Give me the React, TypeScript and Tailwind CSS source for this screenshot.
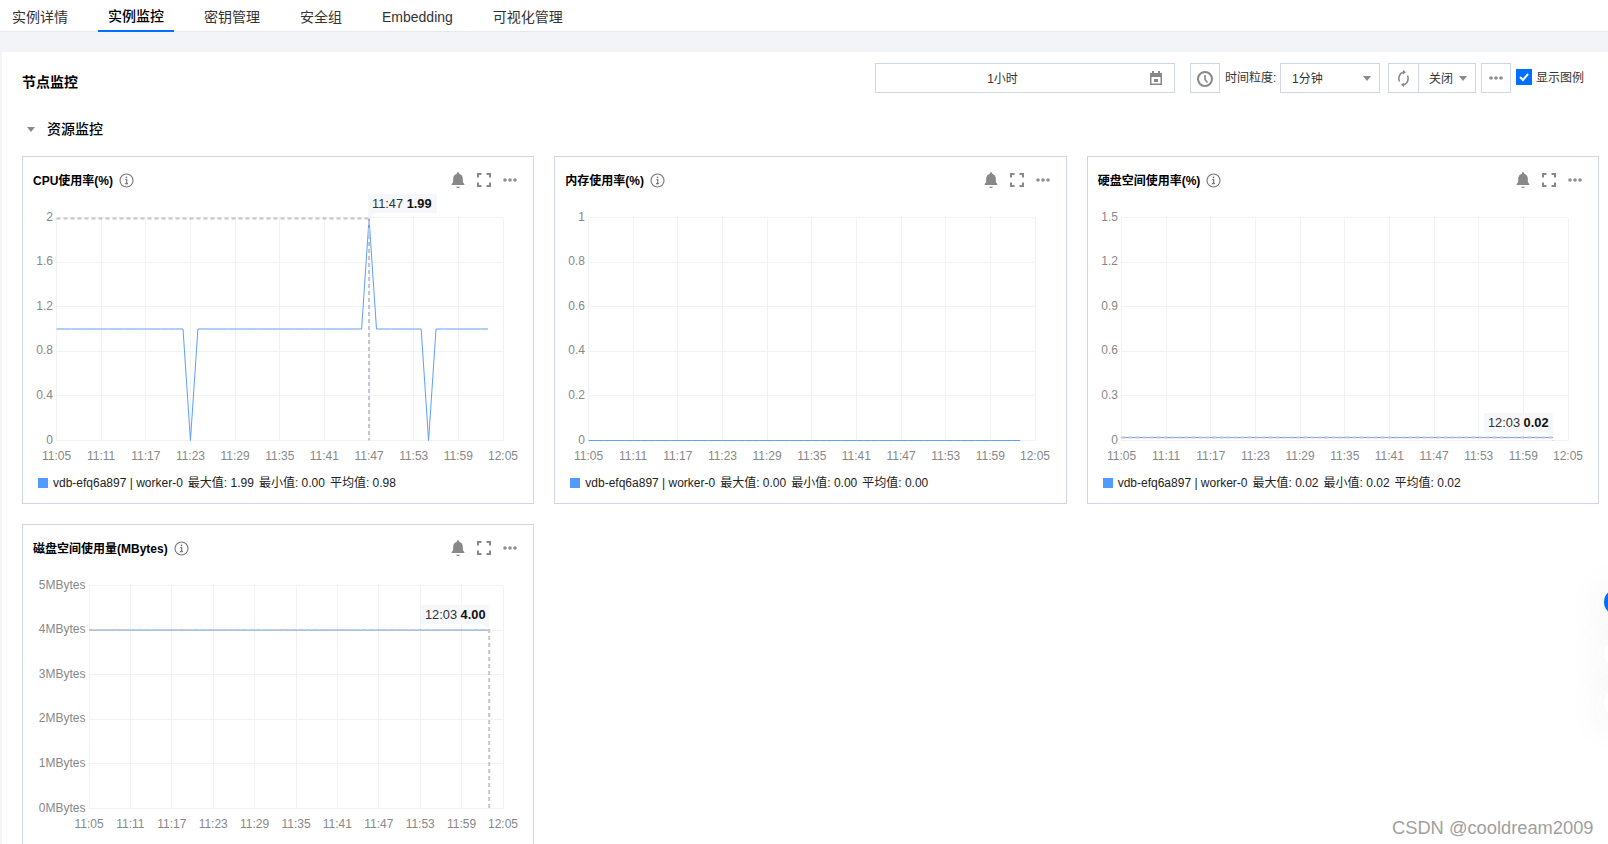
import React from 'react';

const tabs = ['实例详情', '实例监控', '密钥管理', '安全组', 'Embedding', '可视化管理'];
const times = ['11:05', '11:11', '11:17', '11:23', '11:29', '11:35', '11:41', '11:47', '11:53', '11:59', '12:05'];

type Tip = { index: number; time: string; value: string; x: number; y: number; w: number; arrow: 'left' | 'right' };

type ChartProps = {
  plotLeft: number;
  top: number;
  ticks: string[];
  max: number;
  values: number[];
  tip?: Tip;
};

const BellIcon = () => (
  <svg width="18" height="18" viewBox="0 0 16 16" fill="#888">
    <path d="M8 1c.6 0 1 .4 1 1v.4c2 .5 3.300 2.200 3.300 4.300v3l1.400 2v.8H2.300v-.8l1.400-2v-3c0-2.100 1.300-3.800 3.300-4.300V2c0-.6.4-1 1-1z" />
    <path d="M6.300 13.900h3.400c-.2.700-.9 1.200-1.700 1.200s-1.500-.5-1.700-1.200z" />
  </svg>
);

const ExpandIcon = () => (
  <svg width="16" height="16" viewBox="0 0 16 16" fill="none" stroke="#888" strokeWidth="2">
    <path d="M2 5.500V2h3.500M10.500 2H14v3.500M14 10.500V14h-3.500M5.500 14H2v-3.500" />
  </svg>
);

const MoreIcon = () => (
  <svg width="16" height="16" viewBox="0 0 16 16" fill="#8f8f8f">
    <circle cx="3" cy="8" r="1.800" />
    <circle cx="8" cy="8" r="1.800" />
    <circle cx="13" cy="8" r="1.800" />
  </svg>
);

const InfoIcon = () => (
  <svg width="15" height="15" viewBox="0 0 15 15" fill="none" stroke="#777">
    <circle cx="7.500" cy="7.500" r="6.500" strokeWidth="1.100" />
    <path d="M6.300 6.500h1.400v4M6 10.700h3" strokeWidth="1.200" />
    <circle cx="7.500" cy="4.300" r=".9" fill="#777" stroke="none" />
  </svg>
);

const Caret = () => <span className="w-0 h-0 border-x-[4px] border-x-transparent border-t-[5px] border-t-[#888]" />;

const Chart = ({ plotLeft, top, ticks, max, values, tip }: ChartProps) => {
  const right = 480;
  const height = 223;
  const bottom = top + height;
  const step = (right - plotLeft) / 10;
  const rowStep = height / (ticks.length - 1);
  const px = (i: number) => plotLeft + (i * step) / 6;
  const py = (v: number) => bottom - (v / max) * height;
  const points = values.map((v, i) => `${px(i)},${py(v)}`).join(' ');

  return (
    <svg width="510" height="259" className="overflow-visible block">
      {ticks.map((t, i) => (
        <g key={t}>
          <line x1={plotLeft} x2={right} y1={bottom - i * rowStep} y2={bottom - i * rowStep} stroke="#f0f2f5" shapeRendering="crispEdges" />
          <text x={plotLeft - 3.5} y={bottom - i * rowStep + 3} textAnchor="end" fontSize="12" fill="#888">
            {t}
          </text>
        </g>
      ))}
      {times.map((t, i) => (
        <g key={t}>
          <line x1={plotLeft + i * step} x2={plotLeft + i * step} y1={top} y2={bottom} stroke="#f0f2f5" shapeRendering="crispEdges" />
          <text x={plotLeft + i * step} y={bottom + 19} textAnchor="middle" fontSize="12" fill="#888">
            {t}
          </text>
        </g>
      ))}
      <polyline points={points} fill="none" stroke="#5b9fff" strokeWidth="1" />
      {tip && (
        <g>
          <path
            d={`M${plotLeft} ${py(values[tip.index])}H${px(tip.index)}V${bottom}`}
            fill="none"
            stroke="#c4c4cc"
            strokeWidth="2"
            strokeDasharray="4 3"
          />
          <rect x={tip.x} y={tip.y} width={tip.w} height={19} fill="#f5f7fa" />
          {tip.arrow === 'left' ? (
            <path d={`M${tip.x} ${tip.y + 19}h7l-7 5z`} fill="#f5f7fa" />
          ) : (
            <path d={`M${tip.x + tip.w} ${tip.y + 19}h-7l7 5z`} fill="#f5f7fa" />
          )}
          <text x={tip.x + 4} y={tip.y + 13.5} fontSize="12.800" fill="#333">
            {tip.time} <tspan fontWeight="700" fill="#111">{tip.value}</tspan>
          </text>
        </g>
      )}
    </svg>
  );
};

const MetricCard = ({ title, legend, chart }: { title: string; legend?: string[]; chart: ChartProps }) => (
  <div className="h-[348px] border border-[#cfd5e2] bg-white flex flex-col">
    <div className="h-[46px] shrink-0 flex items-center pl-[10px] pr-[15px]">
      <span className="text-xs font-bold text-black pt-[1px]">{title}</span>
      <span className="ml-[6px] flex">
        <InfoIcon />
      </span>
      <div className="ml-auto flex items-center">
        <BellIcon />
        <span className="ml-[9px] flex">
          <ExpandIcon />
        </span>
        <span className="ml-[10px] flex">
          <MoreIcon />
        </span>
      </div>
    </div>
    <Chart {...chart} />
    {legend && (
      <div className="h-[41px] flex items-center pl-[15px] text-xs text-[#222] gap-[5px]">
        <span className="w-[10px] h-[10px] bg-[#4f9bff]" />
        {legend.map((item) => (
          <span key={item}>{item}</span>
        ))}
      </div>
    )}
  </div>
);

const flat = (v: number, n = 59) => Array.from({ length: n }, () => v);
const cpu = flat(1).map((v, i) => (i === 18 || i === 50 ? 0 : i === 42 ? 1.99 : v));

const App = () => {
  return (
    <div className="relative h-screen overflow-hidden bg-white text-[#222] [font-family:'Liberation_Sans','Noto_Sans_CJK_SC',sans-serif]">
      <nav className="h-[32px] flex gap-[20px] pl-[2px] border-b border-[#e6e8ee]">
        {tabs.map((t, i) => (
          <div
            key={t}
            className={
              i === 1
                ? 'h-[32px] px-[10px] pt-[2px] flex items-center text-sm font-medium text-black border-b-2 border-[#006eff]'
                : 'h-[32px] px-[10px] pt-[2px] flex items-center text-sm text-[#333]'
            }
          >
            {t}
          </div>
        ))}
      </nav>

      <div className="h-full bg-[#f2f4f8] pt-[20px] pl-[2px]">
        <main className="h-full bg-white pl-[20px] pr-[9px] pt-[11px]">
          <header className="flex items-center h-[30px] pr-[15px] text-xs">
            <h1 className="text-sm font-bold text-black mt-[8px]">节点监控</h1>
            <div className="ml-auto flex items-center h-[30px] text-[#333]">
              <div className="w-[300px] h-[30px] pt-[1px] pr-[45px] border border-[#cfd5e2] flex items-center justify-center relative">
                1小时
                <svg className="absolute right-[10px] top-[6px]" width="16" height="16" viewBox="0 0 16 16" fill="#888">
                  <path d="M4 1h2v2h4V1h2v2h2v12H2V3h2zM3.500 7v6.500h9V7zM6 9h4v3H6z" fillRule="evenodd" />
                </svg>
              </div>
              <button className="w-[30px] h-[30px] pt-[2px] ml-[15px] border border-[#cfd5e2] flex items-center justify-center">
                <svg width="18" height="18" viewBox="0 0 18 18" fill="none" stroke="#888" strokeWidth="2">
                  <circle cx="9" cy="9" r="7" />
                  <path d="M9 5v4.500l2.500 3" strokeWidth="1.600" />
                </svg>
              </button>
              <span className="ml-[5px] w-[55px]">时间粒度:</span>
              <div className="w-[100px] h-[30px] pt-[1px] border border-[#cfd5e2] flex items-center justify-between pl-[11px] pr-[8px]">
                1分钟
                <Caret />
              </div>
              <div className="w-[88px] h-[30px] ml-[8px] border border-[#cfd5e2] flex items-center">
                <span className="w-[30px] h-full border-r border-[#cfd5e2] flex items-center justify-center">
                  <svg width="13" height="17" viewBox="0 0 13 17" fill="none" stroke="#888" strokeWidth="1.600">
                    <path d="M2.500 11.500A6 6.500 0 0 1 6 2.300M10.500 5.500A6 6.500 0 0 1 7 14.700" />
                    <path d="M6 0l3 2.300-3 2.300zM7 12.400l-3 2.300 3 2.300z" fill="#888" stroke="none" />
                  </svg>
                </span>
                <span className="pl-[10px] pt-[1px]">关闭</span>
                <span className="ml-[6px] flex">
                  <Caret />
                </span>
              </div>
              <button className="w-[30px] h-[30px] ml-[5px] border border-[#cfd5e2] flex items-center justify-center">
                <MoreIcon />
              </button>
              <span className="w-[16px] h-[16px] ml-[5px] mb-[2px] bg-[#006eff] flex items-center justify-center">
                <svg width="12" height="12" viewBox="0 0 12 12" fill="none" stroke="#fff" strokeWidth="2">
                  <path d="M2 6l3 3 5-6" />
                </svg>
              </span>
              <span className="ml-[4px]">显示图例</span>
            </div>
          </header>

          <div className="h-[20px] mt-[26px] flex items-center">
            <span className="ml-[5px] w-0 h-0 border-x-[4px] border-x-transparent border-t-[5px] border-t-[#888]" />
            <h2 className="ml-[12px] text-sm font-medium text-black">资源监控</h2>
          </div>

          <section className="grid grid-cols-3 gap-[20px] mt-[17px]">
            <MetricCard
              title="CPU使用率(%)"
              legend={['vdb-efq6a897 | worker-0', '最大值: 1.99', '最小值: 0.00', '平均值: 0.98']}
              chart={{
                plotLeft: 33.5,
                top: 14.5,
                ticks: ['0', '0.4', '0.8', '1.2', '1.6', '2'],
                max: 2,
                values: cpu,
                tip: { index: 42, time: '11:47', value: '1.99', x: 345, y: -9, w: 69, arrow: 'left' },
              }}
            />
            <MetricCard
              title="内存使用率(%)"
              legend={['vdb-efq6a897 | worker-0', '最大值: 0.00', '最小值: 0.00', '平均值: 0.00']}
              chart={{ plotLeft: 33.5, top: 14.5, ticks: ['0', '0.2', '0.4', '0.6', '0.8', '1'], max: 1, values: flat(0) }}
            />
            <MetricCard
              title="硬盘空间使用率(%)"
              legend={['vdb-efq6a897 | worker-0', '最大值: 0.02', '最小值: 0.02', '平均值: 0.02']}
              chart={{
                plotLeft: 33.5,
                top: 14.5,
                ticks: ['0', '0.3', '0.6', '0.9', '1.2', '1.5'],
                max: 1.5,
                values: flat(0.02),
                tip: { index: 58, time: '12:03', value: '0.02', x: 396, y: 210, w: 69, arrow: 'right' },
              }}
            />
            <MetricCard
              title="磁盘空间使用量(MBytes)"
              chart={{
                plotLeft: 66,
                top: 14.5,
                ticks: ['0MBytes', '1MBytes', '2MBytes', '3MBytes', '4MBytes', '5MBytes'],
                max: 5,
                values: flat(4),
                tip: { index: 58, time: '12:03', value: '4.00', x: 398, y: 34, w: 68, arrow: 'right' },
              }}
            />
          </section>
        </main>
      </div>

      <div className="absolute left-[1604px] top-[589px] w-[26px] h-[26px] rounded-full bg-[#006eff] shadow-[0_4px_40px_rgba(54,58,80,0.14)]" />
      <div className="absolute left-[1604px] top-[640px] w-[26px] h-[26px] rounded-full bg-white shadow-[0_4px_40px_rgba(54,58,80,0.14)]" />
      <div className="absolute left-[1604px] top-[690px] w-[26px] h-[26px] rounded-full bg-white shadow-[0_4px_40px_rgba(54,58,80,0.14)]" />

      <div className="absolute left-[1392px] top-[817px] text-[18.3px] leading-[22px] text-[#a0a0a0]">
        CSDN @cooldream2009
      </div>
    </div>
  );
};

export default App;
